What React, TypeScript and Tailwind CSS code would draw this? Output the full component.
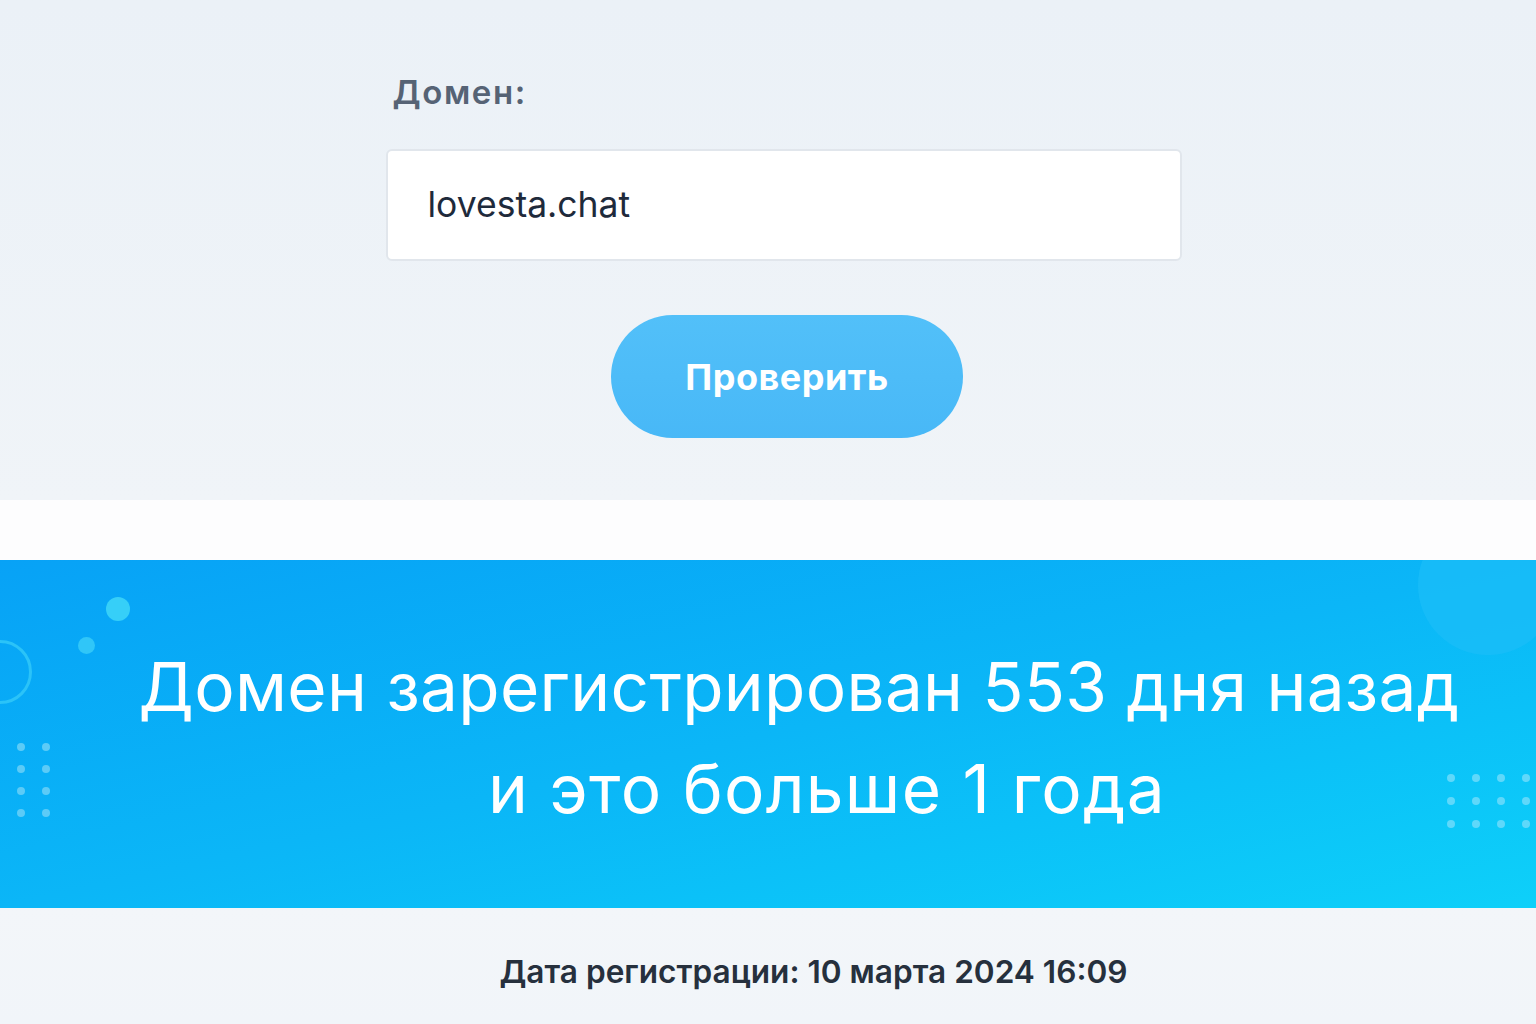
export default function App() {
  const leftDots = [0, 1, 2, 3]
  const rightDots = [0, 1, 2]
  return (
    <div className="w-[1536px] h-[1024px] overflow-hidden bg-[#f1f5f9] font-['Inter','Noto_Sans',sans-serif]">
      {/* form */}
      <section className="h-[500px] bg-gradient-to-b from-[#ebf1f7] to-[#f0f4f8] flex justify-center">
        <div className="w-[796px] ml-[31px] pt-[70px] flex flex-col">
          <label className="pl-[7px] text-[33px] leading-[44px] font-semibold text-[#566375] tracking-[1.6px]">
            Домен:
          </label>
          <div className="mt-[35px] h-[112px] bg-white border-2 border-[#e1e6ec] rounded-[6px] flex items-center pl-[40px] text-[35.5px] text-[#1e2a3b]">
            lovesta.chat
          </div>
          <div className="mt-[54px] flex justify-center">
            <button className="w-[352px] h-[123px] ml-[7px] rounded-full bg-gradient-to-b from-[#52c0f9] to-[#48b8f7] text-white text-[36px] font-bold tracking-[0.5px]">
              Проверить
            </button>
          </div>
        </div>
      </section>

      <div className="h-[60px] bg-[#fdfdfe]" />

      {/* result banner */}
      <section className="relative h-[348px] overflow-hidden bg-gradient-to-br from-[#08a2f6] via-[#0bb6f7] to-[#0ed0f9] flex flex-col items-center justify-center pt-[8px]">
        <span className="absolute left-[106px] top-[37px] w-[24px] h-[24px] rounded-full bg-[#36cff8]" />
        <span className="absolute left-[78px] top-[77px] w-[17px] h-[17px] rounded-full bg-[#30c6f8]" />
        <span className="absolute left-[-32px] top-[80px] w-[64px] h-[64px] rounded-full border-[3px] border-[#2bc3f8]" />
        <div className="absolute left-[17px] top-[183px] grid grid-cols-2 gap-x-[17px] gap-y-[14px]">
          {leftDots.map((r) => (
            <>
              <span key={`a${r}`} className="w-[8px] h-[8px] rounded-full bg-[#5ccbf7]" />
              <span key={`b${r}`} className="w-[8px] h-[8px] rounded-full bg-[#5ccbf7]" />
            </>
          ))}
        </div>
        <span className="absolute left-[1418px] top-[-45px] w-[140px] h-[140px] rounded-full bg-[#1bbef8]/70" />
        <div className="absolute left-[1447px] top-[214px] grid grid-cols-4 gap-x-[17px] gap-y-[15px]">
          {rightDots.map((r) =>
            [0, 1, 2, 3].map((c) => (
              <span key={`${r}-${c}`} className="w-[8px] h-[8px] rounded-full bg-[#5fd8fa]" />
            ))
          )}
        </div>
        <h1 className="relative flex flex-col items-center text-white text-[67.5px] leading-[102px] font-normal tracking-[0.3px]">
          <span className="ml-[62px]">Домен зарегистрирован 553 дня назад</span>
          <span className="ml-[118px] tracking-[1.3px]">и это больше 1 года</span>
        </h1>
      </section>

      <section className="h-[116px] bg-gradient-to-b from-[#f3f6f9] to-[#f1f5f9] flex justify-center pt-[46px]">
        <p className="text-[31.6px] leading-[36px] font-semibold text-[#26303d] ml-[91px]">
          Дата регистрации: 10 марта 2024 16:09
        </p>
      </section>
    </div>
  )
}
